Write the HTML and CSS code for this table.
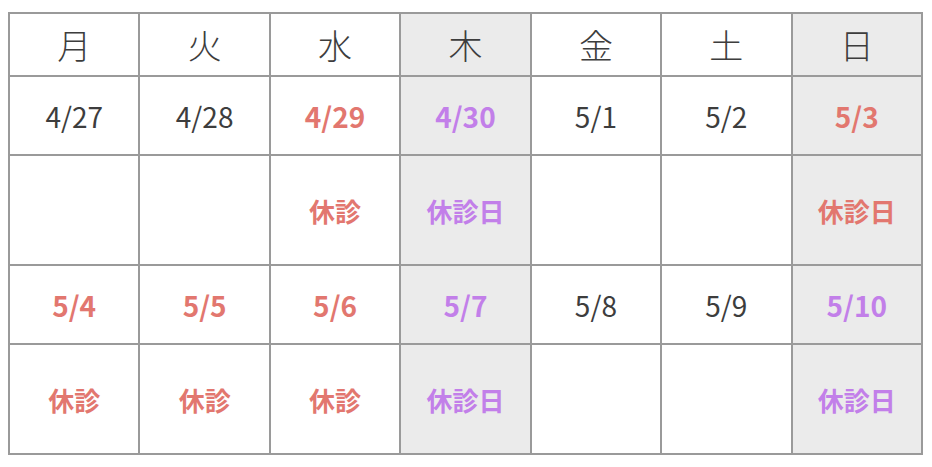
FILE: index.html
```html
<!DOCTYPE html>
<html lang="ja">
<head>
<meta charset="utf-8">
<link rel="stylesheet" href="styles.css">
</head>
<body>
<table class="cal">
  <tr class="head">
    <th>月</th><th>火</th><th>水</th><th class="gray">木</th><th>金</th><th>土</th><th class="gray">日</th>
  </tr>
  <tr class="date">
    <td>4/27</td><td>4/28</td><td class="red">4/29</td><td class="gray purple">4/30</td><td>5/1</td><td>5/2</td><td class="gray red">5/3</td>
  </tr>
  <tr class="note">
    <td></td><td></td><td class="red">休診</td><td class="gray purple">休診日</td><td></td><td></td><td class="gray red">休診日</td>
  </tr>
  <tr class="date">
    <td class="red">5/4</td><td class="red">5/5</td><td class="red">5/6</td><td class="gray purple">5/7</td><td>5/8</td><td>5/9</td><td class="gray purple">5/10</td>
  </tr>
  <tr class="note">
    <td class="red">休診</td><td class="red">休診</td><td class="red">休診</td><td class="gray purple">休診日</td><td></td><td></td><td class="gray purple">休診日</td>
  </tr>
</table>
</body>
</html>
```
FILE: styles.css
```css
html, body {
  margin: 0;
  padding: 0;
  background: #ffffff;
}
body {
  padding: 12px 0 0 8px;
  font-family: "Noto Sans CJK JP", "Noto Sans", sans-serif;
  color: #3d3d3d;
}
.cal {
  border-collapse: collapse;
  table-layout: fixed;
  width: 915px;
}
.cal th, .cal td {
  border: 2px solid #9a9a9a;
  text-align: center;
  vertical-align: middle;
  padding: 0;
}
.head th {
  height: 61px;
  font-size: 34px;
  font-weight: 300;
}
.date td {
  height: 77px;
  font-size: 28px;
  font-weight: 400;
}
.note td {
  height: 108px;
  font-size: 26px;
  font-weight: 700;
}
.date td.red, .date td.purple {
  font-weight: 700;
}
.gray {
  background: #ebebeb;
}
.red {
  color: #e2776f;
}
.purple {
  color: #c27fe9;
}
```
